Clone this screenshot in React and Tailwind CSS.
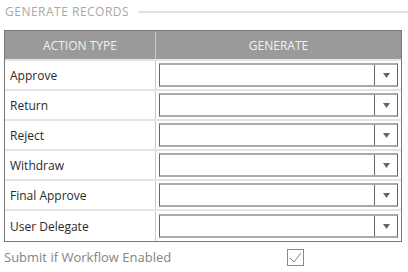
import React from "react";

const rows = ["Approve", "Return", "Reject", "Withdraw", "Final Approve", "User Delegate"];

function Select() {
  return (
    <div className="flex h-[24px] w-[239px] border-y-2 border-x border-y-[#aaaaaa] border-x-[#666666] bg-white">
      <div className="flex-1" />
      <div className="flex w-[23px] items-center justify-center border-l border-[#666666]">
        <svg width="7" height="5" viewBox="0 0 7 5">
          <path d="M0 0 H7 L3.5 5 Z" fill="#666666" />
        </svg>
      </div>
    </div>
  );
}

export default function App() {
  return (
    <div className="h-[272px] w-[408px] bg-white font-['Open_Sans',sans-serif]">
      <div className="flex h-[24px] items-center pl-[5px]">
        <span className="text-[12px] uppercase tracking-[0.5px] text-[#a8a8a8]">Generate Records</span>
        <div className="ml-[9px] h-[2px] flex-1 bg-[#e2e2e2]" />
      </div>
      <div className="ml-[4px] mt-[6px] w-[398px] border border-[#777777]">
        <div className="flex h-[30px] bg-[#9a9a9a] pt-px text-[12px] text-[#f2f2f2] border-b-2 border-[#e4e4e4]">
          <div className="flex w-[151px] items-center justify-center border-r border-[#cccccc]">ACTION TYPE</div>
          <div className="flex flex-1 items-center justify-center">GENERATE</div>
        </div>
        {rows.map((r, i) => (
          <div
            key={r}
            className={`flex h-[30px] text-[12px] text-[#2a2a2a] ${i < rows.length - 1 ? "border-b-2 border-[#e4e4e4]" : ""}`}
          >
            <div className="flex w-[151px] items-center border-r border-[#cccccc] pl-[5px] pt-px">{r}</div>
            <div className="flex flex-1 items-center pl-[3px]">
              <Select />
            </div>
          </div>
        ))}
      </div>
      <div className="relative mt-[7px] flex h-[17px] items-center pl-[4px]">
        <span className="text-[13px] text-[#858585]">Submit if Workflow Enabled</span>
        <div className="absolute left-[287px] top-0 flex h-[17px] w-[17px] items-center justify-center border border-[#888888]">
          <svg width="13" height="11" viewBox="0 0 13 11">
            <path d="M1 6 L5 10 L12 1" fill="none" stroke="#888888" strokeWidth="1" />
          </svg>
        </div>
      </div>
    </div>
  );
}
